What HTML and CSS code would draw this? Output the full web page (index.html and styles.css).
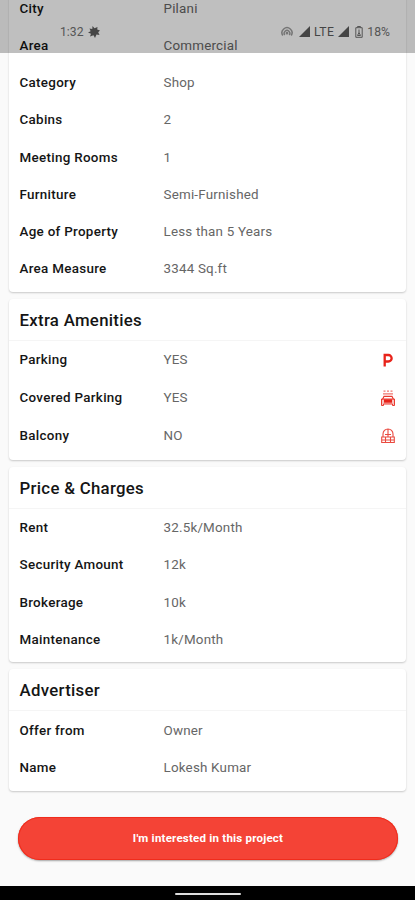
FILE: index.html
```html
<!DOCTYPE html>
<html lang="en">

<head>
  <meta charset="UTF-8">
  <meta name="viewport" content="width=device-width, initial-scale=1.0">
  <title>Property Details</title>
  <link rel="stylesheet" href="styles.css">
</head>

<body>
  <div class="status-bar">
    <div class="status-left">
      <span>1:32</span>
      <svg width="12" height="12" viewBox="0 0 12 12"><path d="M4.500 0L6.500 2.200 9.500 1l-.3 2.500L12 4.500 10.200 6.200 11.500 9l-3-.5L7 12 5.500 9.200 2 10.500l1-2.800L0 6.500l2.600-1.200L1.500 2.500l2.800.4z" fill="#454545"/></svg>
    </div>
    <div class="status-right">
      <svg class="hotspot" width="12" height="12" viewBox="0 0 12 12" fill="none" stroke="#757575" stroke-width="1.5"><path d="M1.800 9.500A5 5 0 1 1 10.200 9.500M3.800 9a2.800 2.800 0 1 1 4.400 0"/><circle cx="6" cy="7.200" r=".6" fill="#757575"/></svg>
      <svg class="signal" width="11" height="11" viewBox="0 0 11 11"><path d="M11 0v11H0z" fill="#454545"/></svg>
      <span class="lte">LTE</span>
      <svg class="signal" width="11" height="11" viewBox="0 0 11 11"><path d="M11 0v11H0z" fill="#454545"/></svg>
      <svg class="battery" width="8" height="12" viewBox="0 0 8 12" fill="none" stroke="#555"><path d="M2.500 1.500V.5h3v1M.8 1.700h6.400v9.600H.8z"/><path d="M4 3.500v3M2.500 9.500l1.500-3 1.500 3z"/></svg>
      <span>18%</span>
    </div>
  </div>

  <div class="content">
    <div class="card first">
      <div class="row"><span class="label">City</span><span class="value">Pilani</span></div>
      <div class="row"><span class="label">Area</span><span class="value">Commercial</span></div>
      <div class="row"><span class="label">Category</span><span class="value">Shop</span></div>
      <div class="row"><span class="label">Cabins</span><span class="value">2</span></div>
      <div class="row"><span class="label">Meeting Rooms</span><span class="value">1</span></div>
      <div class="row"><span class="label">Furniture</span><span class="value">Semi-Furnished</span></div>
      <div class="row"><span class="label">Age of Property</span><span class="value">Less than 5 Years</span></div>
      <div class="row"><span class="label">Area Measure</span><span class="value">3344 Sq.ft</span></div>
    </div>

    <div class="card amenities">
      <h2>Extra Amenities</h2>
      <div class="row">
        <span class="label">Parking</span><span class="value">YES</span>
        <svg class="icon" width="14" height="16" viewBox="0 0 14 16"><path d="M3.700 14.500V3h3.700a3.100 3.100 0 0 1 0 6.500H3.700" fill="none" stroke="#e8231a" stroke-width="2.300"/></svg>
      </div>
      <div class="row">
        <span class="label">Covered Parking</span><span class="value">YES</span>
        <svg class="icon" width="14" height="16" viewBox="0 0 14 16" fill="none" stroke="#ea3a30">
          <path d="M2.500 1.200h2M6 1.200h2M9.500 1.200h2M2 3.800h10" stroke-width="1.200" opacity=".7"/>
          <path d="M1.500 9.500L3 6.300h8l1.500 3.200" stroke-width="1.200"/>
          <path d="M.5 9h13v6.500h-2V14h-9v1.500h-2z" fill="#ea3a30" fill-opacity=".3" stroke-width="1"/>
          <path d="M3 9.300h8v3.400H3z" fill="#e8231a" stroke="none"/>
        </svg>
      </div>
      <div class="row">
        <span class="label">Balcony</span><span class="value">NO</span>
        <svg class="icon" width="14" height="16" viewBox="0 0 14 16" fill="none" stroke="#ea4a40" stroke-width="1.100">
          <path d="M2 9V6a5 5 0 0 1 10 0v3M7 1v8M4 6.500h6"/>
          <path d="M.7 9h12.600v5.500H.7zM4.500 9v5.500M9.500 9v5.500M1 12h12"/>
        </svg>
      </div>
    </div>

    <div class="card">
      <h2>Price &amp; Charges</h2>
      <div class="row"><span class="label">Rent</span><span class="value">32.5k/Month</span></div>
      <div class="row"><span class="label">Security Amount</span><span class="value">12k</span></div>
      <div class="row"><span class="label">Brokerage</span><span class="value">10k</span></div>
      <div class="row"><span class="label">Maintenance</span><span class="value">1k/Month</span></div>
    </div>

    <div class="card last">
      <h2>Advertiser</h2>
      <div class="row"><span class="label">Offer from</span><span class="value">Owner</span></div>
      <div class="row"><span class="label">Name</span><span class="value">Lokesh Kumar</span></div>
    </div>

    <button class="interest">I'm interested in this project</button>
  </div>

  <div class="nav-bar"><div class="handle"></div></div>
</body>

</html>
```
FILE: styles.css
```css
* {
  box-sizing: border-box;
}

body {
  margin: 0;
  height: 900px;
  overflow: hidden;
  display: flex;
  flex-direction: column;
  background-color: #fafafa;
  font-family: Roboto, sans-serif;
  font-size: 13.4px;
  color: #151515;
}

/* translucent bar over the scrolled content */
.status-bar {
  position: absolute;
  top: 0;
  left: 0;
  width: 100%;
  height: 53px;
  padding: 10px 25px 0 60px;
  display: flex;
  justify-content: space-between;
  align-items: center;
  background-color: rgba(0, 0, 0, 0.25);
  color: #555;
  font-size: 12.2px;
}

.status-left,
.status-right {
  display: flex;
  align-items: center;
}

.status-left svg {
  margin-left: 4px;
}

.hotspot {
  margin-right: 6px;
}

.lte {
  margin: 0 4px;
  color: #454545;
  letter-spacing: 0.4px;
}

.battery {
  margin: 0 4px 0 6px;
}

.content {
  flex: 1;
  min-height: 0;
  padding: 0 9px;
  display: flex;
  flex-direction: column;
}

.card {
  flex: none;
  margin-bottom: 7px;
  padding-bottom: 4.5px;
  background-color: #fff;
  border-radius: 4px;
  box-shadow: 0 1px 2px rgba(0, 0, 0, 0.2);
}

.first {
  margin-top: -10.5px;
  padding-bottom: 4.2px;
}

.amenities {
  padding-bottom: 5.3px;
}

.last {
  padding-bottom: 5px;
}

.card h2 {
  margin: 0;
  height: 42px;
  line-height: 43px;
  padding: 0 10.5px;
  border-bottom: 1px solid #f5f5f5;
  font-size: 16.8px;
  font-weight: 500;
  letter-spacing: 0.3px;
}

.row {
  height: 37.25px;
  padding: 0 11px 0 10.5px;
  display: flex;
  align-items: center;
}

.amenities .row {
  height: 38px;
}

.label {
  width: 144px;
  font-weight: 500;
  letter-spacing: 0.3px;
}

.value {
  flex: 1;
  color: #666;
  letter-spacing: 0.2px;
}

.interest {
  flex: none;
  height: 43px;
  margin: 19px 8px 0 9px;
  border: none;
  border-radius: 22px;
  background-color: #f44336;
  box-shadow: 0 1px 2px rgba(0, 0, 0, 0.35), inset 0 0 0 1px #f02c1c;
  color: #fff;
  font-family: inherit;
  font-size: 11.5px;
  font-weight: 700;
  letter-spacing: 0.22px;
}

.nav-bar {
  height: 14px;
  padding-top: 2px;
  display: flex;
  justify-content: center;
  align-items: center;
  background-color: #000;
}

.handle {
  width: 66px;
  height: 2px;
  border-radius: 1px;
  background-color: #ddd;
}
```
